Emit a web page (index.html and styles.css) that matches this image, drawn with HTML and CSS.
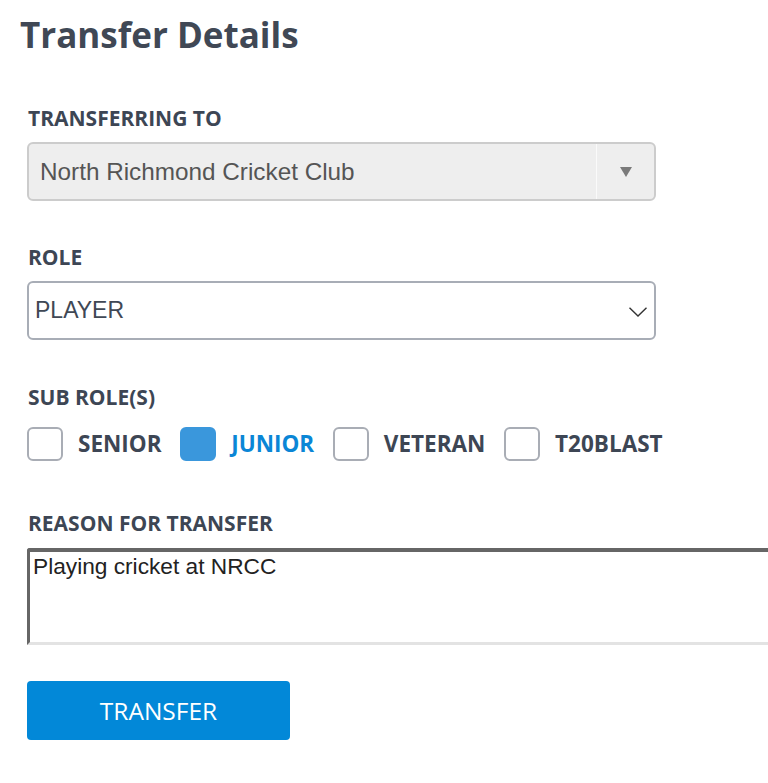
FILE: index.html
```html
<!DOCTYPE html>
<html lang="en">
<head>
<meta charset="utf-8">
<title>Transfer Details</title>
<link rel="stylesheet" href="styles.css">
</head>
<body>
<main class="page">
  <h1 class="title">Transfer Details</h1>
  <form class="form">
    <div class="field">
      <label class="label">TRANSFERRING TO</label>
      <div class="select select--disabled">
        <span class="select__value">North Richmond Cricket Club</span>
        <span class="select__arrow">
          <svg width="12" height="10" viewBox="0 0 12 10"><path d="M0 0 H12 L6 10 Z" fill="#7a7a7a"/></svg>
        </span>
      </div>
    </div>
    <div class="field field--role">
      <label class="label">ROLE</label>
      <div class="select select--open">
        <span class="select__value select__value--role">PLAYER</span>
        <span class="select__chevron">
          <svg width="18" height="10" viewBox="0 0 18 10"><path d="M0.5 0.8 L9 9 L17.5 0.8" fill="none" stroke="#333" stroke-width="1.4"/></svg>
        </span>
      </div>
    </div>
    <div class="field field--subroles">
      <label class="label">SUB ROLE(S)</label>
      <div class="checks">
        <span class="check"><span class="check__box"></span><span class="check__text">SENIOR</span></span>
        <span class="check check--on"><span class="check__box"></span><span class="check__text">JUNIOR</span></span>
        <span class="check"><span class="check__box"></span><span class="check__text">VETERAN</span></span>
        <span class="check"><span class="check__box"></span><span class="check__text">T20BLAST</span></span>
      </div>
    </div>
    <div class="field field--reason">
      <label class="label">REASON FOR TRANSFER</label>
      <div class="textarea">Playing cricket at NRCC</div>
    </div>
    <button type="button" class="button">TRANSFER</button>
  </form>
</main>
</body>
</html>
```

FILE: styles.css
```css
html, body {
  margin: 0;
  padding: 0;
  background: #ffffff;
  overflow: hidden;
}

.page {
  padding: 14px 0 0 20px;
  font-family: "Open Sans", "DejaVu Sans", sans-serif;
  color: #404855;
}

.title {
  margin: 0;
  font-size: 35px;
  line-height: 42px;
  font-weight: 700;
  color: #404855;
}

.form {
  padding-left: 7px;
  margin-top: 50px;
  display: flex;
  flex-direction: column;
}

.field {
  display: flex;
  flex-direction: column;
  margin-bottom: 44px;
}

.field--role {
  margin-bottom: 45px;
}

.label {
  display: block;
  margin-left: 1px;
  font-size: 21px;
  line-height: 24px;
  font-weight: 700;
  color: #3d4654;
  margin-bottom: 12px;
}

.select {
  box-sizing: border-box;
  width: 629px;
  height: 59px;
  border-radius: 6px;
  display: flex;
  align-items: center;
  font-family: "Liberation Sans", Arial, sans-serif;
}

.select--disabled {
  background: #eeeeee;
  border: 2px solid #cccccc;
  color: #555555;
  font-size: 24.3px;
}

.select--open {
  background: #ffffff;
  border: 2px solid #a8adb6;
  color: #404855;
  font-size: 23px;
}

.select__value {
  flex: 1;
  padding-left: 11px;
}

.select__value--role {
  padding-left: 6px;
}

.select__arrow {
  align-self: stretch;
  width: 57px;
  border-left: 1px solid #fafafa;
  display: flex;
  align-items: center;
  justify-content: center;
}

.select__chevron {
  display: flex;
  align-items: center;
  margin-right: 7px;
  padding-top: 3px;
}

.field--subroles {
  margin-bottom: 50px;
}

.field--subroles .label {
  margin-bottom: 18px;
}

.checks {
  display: flex;
  align-items: center;
}

.check {
  display: flex;
  align-items: center;
  margin-right: 18.7px;
}

.check__box {
  box-sizing: border-box;
  width: 36px;
  height: 34px;
  border: 2px solid #a9adb5;
  border-radius: 6px;
  background: #ffffff;
  margin-right: 15px;
}

.check--on .check__box {
  background: #3a97dc;
  border-color: #3a97dc;
}

.check__text {
  font-size: 22.5px;
  line-height: 30px;
  font-weight: 700;
  color: #3d4654;
}

.check--on .check__text {
  color: #0a86d6;
}

.field--reason {
  margin-bottom: 36px;
}

.field--reason .label {
  margin-bottom: 13px;
}

.textarea {
  box-sizing: border-box;
  width: 760px;
  height: 97px;
  border-style: solid;
  border-width: 4px 3px 3px 3px;
  border-color: #666666 #e3e3e3 #e3e3e3 #666666;
  border-top-left-radius: 3px;
  padding: 1px 3px 0;
  font-family: "Liberation Sans", Arial, sans-serif;
  font-size: 22.7px;
  line-height: 26px;
  color: #222222;
}

.button {
  box-sizing: border-box;
  width: 263px;
  height: 59px;
  border: none;
  border-radius: 4px;
  background: #0288d8;
  color: #ffffff;
  font-family: "Open Sans", "DejaVu Sans", sans-serif;
  font-size: 24.5px;
  font-weight: 400;
  padding: 0;
}
```
